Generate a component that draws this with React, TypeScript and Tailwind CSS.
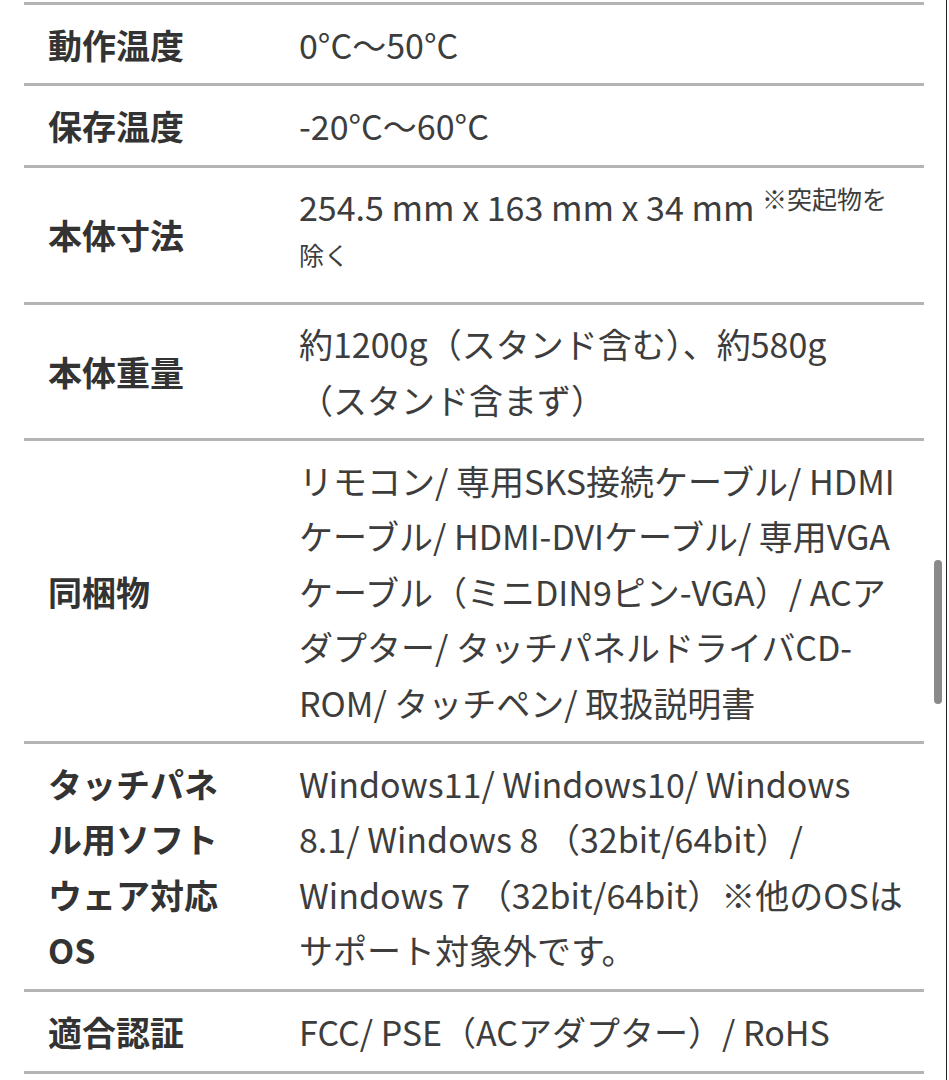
import React from "react";

type Row = { label: React.ReactNode; value: React.ReactNode };

const sup = "text-[25px] leading-[0] relative -top-[12px] align-baseline";

const rows: Row[] = [
  { label: "動作温度", value: "0°C〜50°C" },
  { label: "保存温度", value: "-20°C〜60°C" },
  {
    label: "本体寸法",
    value: (
      <>
        254.5 mm x 163 mm x 34 mm <sup className={sup}>※突起物を</sup>
        <br />
        <sup className={sup}>除く</sup>
      </>
    ),
  },
  {
    label: "本体重量",
    value: (
      <>
        約1200g（スタンド含む）、約580g
        <br />
        （スタンド含まず）
      </>
    ),
  },
  {
    label: "同梱物",
    value: (
      <>
        リモコン/ 専用SKS接続ケーブル/ HDMI
        <br />
        ケーブル/ HDMI-DVIケーブル/ 専用VGA
        <br />
        ケーブル（ミニDIN9ピン-VGA）/ ACア
        <br />
        ダプター/ タッチパネルドライバCD-
        <br />
        ROM/ タッチペン/ 取扱説明書
      </>
    ),
  },
  {
    label: (
      <>
        タッチパネ
        <br />
        ル用ソフト
        <br />
        ウェア対応
        <br />
        OS
      </>
    ),
    value: (
      <>
        Windows11/ Windows10/ Windows
        <br />
        8.1/ Windows 8 （32bit/64bit）/
        <br />
        Windows 7 （32bit/64bit）※他のOSは
        <br />
        サポート対象外です。
      </>
    ),
  },
  { label: "適合認証", value: "FCC/ PSE（ACアダプター）/ RoHS" },
];

export default function App() {
  return (
    <div className="relative w-[949px] h-[1080px] overflow-hidden bg-white font-['Noto_Sans_CJK_JP','Noto_Sans',sans-serif]">
      <div className="ml-[24px] w-[900px] pt-[2px]">
        {rows.map((r, i) => (
          <div key={i} className="flex border-t-[3px] border-[#b4b4b4]">
            <div className="w-[275px] shrink-0 pl-[24px] flex items-center py-[11.5px] font-bold text-[#333333] text-[34px] leading-[55.4px] whitespace-nowrap">
              <div>{r.label}</div>
            </div>
            <div className="flex-1 py-[11.5px] text-[#3d3d3d] text-[34px] leading-[55.4px] whitespace-nowrap">
              {r.value}
            </div>
          </div>
        ))}
        <div className="border-t-[3px] border-[#b4b4b4]" />
      </div>
      <div className="absolute left-[934px] top-[560px] w-[8px] h-[144px] rounded-full bg-[#8a8a8a]" />
      <div className="absolute left-[946px] top-0 bottom-0 w-px bg-[#222222]" />
    </div>
  );
}
